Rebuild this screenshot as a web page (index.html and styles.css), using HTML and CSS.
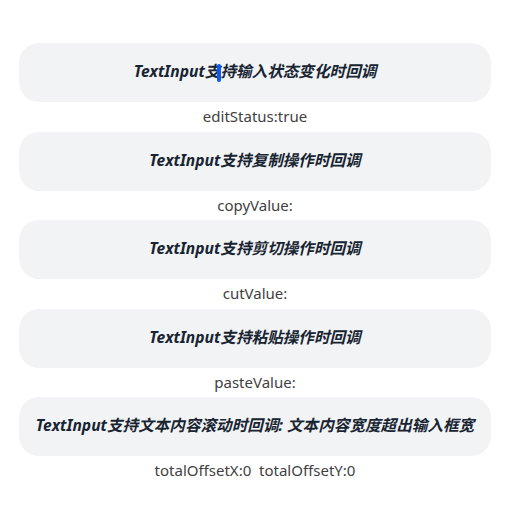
FILE: index.html
```html
<!DOCTYPE html>
<html lang="zh">
<head>
<meta charset="utf-8">
<link rel="stylesheet" href="styles.css">
</head>
<body>
<div class="page">
  <div class="card"><span class="title">TextInput支<span class="caret"></span>持输入状态变化时回调</span></div>
  <div class="label">editStatus:true</div>
  <div class="card"><span class="title">TextInput支持复制操作时回调</span></div>
  <div class="label">copyValue:</div>
  <div class="card"><span class="title">TextInput支持剪切操作时回调</span></div>
  <div class="label">cutValue:</div>
  <div class="card"><span class="title">TextInput支持粘贴操作时回调</span></div>
  <div class="label">pasteValue:</div>
  <div class="card"><span class="title">TextInput支持文本内容滚动时回调: 文本内容宽度超出输入框宽</span></div>
  <div class="label">totalOffsetX:0&nbsp;&nbsp;totalOffsetY:0</div>
</div>
</body>
</html>
```
FILE: styles.css
```css
html, body {
  margin: 0;
  padding: 0;
  background: #ffffff;
}
body {
  width: 518px;
  height: 525px;
  overflow: hidden;
}
.page {
  margin-left: 19px;
  width: 472px;
  padding-top: 43px;
  display: flex;
  flex-direction: column;
}
.card {
  height: 59px;
  box-sizing: border-box;
  padding-bottom: 3px;
  border-radius: 20px;
  background: #f1f3f5;
  display: flex;
  align-items: center;
  justify-content: center;
  overflow: hidden;
}
.title {
  font-family: "Noto Sans", "Noto Sans CJK SC", sans-serif;
  font-weight: 700;
  font-style: italic;
  font-size: 15.6px;
  line-height: 20px;
  color: #182431;
  white-space: nowrap;
}
.caret {
  display: inline-block;
  position: relative;
  width: 0;
  height: 1em;
  vertical-align: middle;
}
.caret::after {
  content: "";
  position: absolute;
  left: -3px;
  top: -1px;
  width: 4px;
  height: 18px;
  border-radius: 2px;
  background: #0a59f7;
}
.label {
  height: 29.5px;
  box-sizing: border-box;
  padding-bottom: 1px;
  display: flex;
  align-items: center;
  justify-content: center;
  font-family: "Noto Sans", "Noto Sans CJK SC", sans-serif;
  font-size: 15px;
  color: #3f3f3f;
  white-space: nowrap;
}
```
